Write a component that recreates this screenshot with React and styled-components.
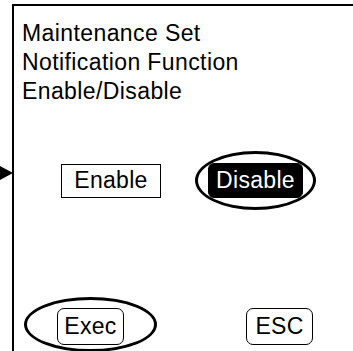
import React from 'react'
import styled, { createGlobalStyle } from 'styled-components'

const GlobalStyle = createGlobalStyle`
  html, body {
    margin: 0;
    padding: 0;
    background: #fff;
  }
  body {
    font-family: "Liberation Sans", Arial, sans-serif;
    color: #000;
  }
`

const App = () => (
  <>
    <GlobalStyle />
    <Screen>
      <Pointer />
      <Title>
        <div>Maintenance Set</div>
        <div>Notification Function</div>
        <div>Enable/Disable</div>
      </Title>
      <OptionRow>
        <OptionBox>Enable</OptionBox>
        <Choice>
          <OptionBox $selected>Disable</OptionBox>
          <Ring $x={13} $top={12} $bottom={12} />
        </Choice>
      </OptionRow>
      <KeyRow>
        <Choice>
          <KeyButton>Exec</KeyButton>
          <Ring $x={33} $top={11} $bottom={7} />
        </Choice>
        <KeyButton>ESC</KeyButton>
      </KeyRow>
    </Screen>
  </>
)

const Screen = styled.div`
  position: relative;
  box-sizing: border-box;
  height: calc(100vh - 4px);
  margin: 4px 0 0 12px;
  padding: 13px 0 0 8px;
  border-top: 2px solid #000;
  border-left: 2px solid #000;
  display: flex;
  flex-direction: column;
`

const Pointer = styled.div`
  position: absolute;
  left: -14px;
  top: 160px;
  width: 0;
  height: 0;
  border-left: 13px solid #000;
  border-top: 7px solid transparent;
  border-bottom: 7px solid transparent;
`

const Title = styled.div`
  font-size: 23px;
  line-height: 29px;
  letter-spacing: 0.4px;
`

const OptionRow = styled.div`
  display: flex;
  align-items: center;
  gap: 47px;
  margin: 57px 0 0 39px;
`

const KeyRow = styled.div`
  display: flex;
  align-items: center;
  gap: 122px;
  margin: 110px 0 0 35px;
`

const Choice = styled.div`
  position: relative;
  display: flex;
`

const OptionBox = styled.div`
  box-sizing: border-box;
  width: ${p => (p.$selected ? '95px' : '100px')};
  height: ${p => (p.$selected ? '35px' : '34px')};
  display: flex;
  align-items: center;
  justify-content: center;
  font-size: 23px;
  letter-spacing: 0.3px;
  border: 1px solid #000;
  border-radius: ${p => (p.$selected ? '6px' : '0')};
  background: ${p => (p.$selected ? '#000' : '#fff')};
  color: ${p => (p.$selected ? '#fff' : '#000')};
`

const KeyButton = styled.div`
  box-sizing: border-box;
  width: 67px;
  height: 37px;
  display: flex;
  align-items: center;
  justify-content: center;
  font-size: 23px;
  letter-spacing: 0.3px;
  border: 1px solid #000;
  border-radius: 7px;
  background: #fff;
`

const Ring = styled.div`
  position: absolute;
  left: -${p => p.$x}px;
  right: -${p => p.$x}px;
  top: -${p => p.$top}px;
  bottom: -${p => p.$bottom}px;
  border: 3px solid #000;
  border-radius: 50%;
  pointer-events: none;
`

export default App
